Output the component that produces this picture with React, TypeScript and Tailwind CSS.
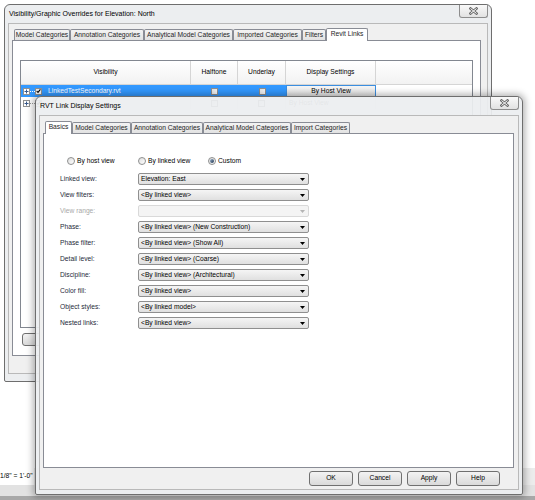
import type { ReactNode } from "react"

function CloseButton() {
  return (
    <div className="flex h-[13px] w-[29px] items-center justify-center rounded-b-[3px] border border-t-0 border-[#8d8d8d] bg-gradient-to-b from-[#f9f9f9] to-[#e2e2e2]">
      <svg width="9" height="8" viewBox="0 0 9 8">
        <path d="M1.5 1.5 L7.5 6.5 M7.5 1.5 L1.5 6.5" stroke="#6b6b6b" strokeWidth="2.6" strokeLinecap="square" />
        <path d="M1.5 1.5 L7.5 6.5 M7.5 1.5 L1.5 6.5" stroke="#ffffff" strokeWidth="1" />
      </svg>
    </div>
  )
}

function Window({ title, className, children }: { title: string; className: string; children: ReactNode }) {
  return (
    <div className={`absolute flex flex-col rounded-t-[6px] rounded-b-[2px] border border-[#6e6e6e] px-[3px] ${className}`}>
      <div className="flex h-[18px] shrink-0 items-start justify-between">
        <span className="pl-[1px] pt-[5px] text-[7px] leading-[8px] text-black">{title}</span>
        <CloseButton />
      </div>
      {children}
    </div>
  )
}

function Tab({ label, width, active }: { label: string; width: string; active?: boolean }) {
  if (active) {
    return (
      <div className={`relative z-10 -mb-px flex h-[13px] items-start justify-center rounded-t-[2px] border border-b-0 border-[#898c95] bg-white pt-[2px] ${width}`}>
        {label}
      </div>
    )
  }
  return (
    <div className={`flex h-[11px] items-center justify-center rounded-t-[2px] border border-b-0 border-[#898c95] bg-gradient-to-b from-[#f3f3f3] to-[#e2e2e2] ${width}`}>
      {label}
    </div>
  )
}

function Expander() {
  return (
    <span className="flex h-[7px] w-[7px] items-center justify-center border border-[#919191] bg-white">
      <svg width="5" height="5" viewBox="0 0 5 5">
        <path d="M0.5 2.5 H4.5 M2.5 0.5 V4.5" stroke="#3a5a8c" strokeWidth="1" />
      </svg>
    </span>
  )
}

function Check({ checked }: { checked?: boolean }) {
  return (
    <span className="flex h-[7px] w-[7px] items-center justify-center border border-[#8f8f8f] bg-gradient-to-br from-[#e4e4e4] to-white">
      {checked && (
        <svg width="6" height="6" viewBox="0 0 6 6">
          <path d="M0.8 3 L2.4 4.7 L5.3 1" stroke="#000" strokeWidth="1.3" fill="none" />
        </svg>
      )}
    </span>
  )
}

function Radio({ checked }: { checked?: boolean }) {
  return (
    <span className="flex h-[8px] w-[8px] items-center justify-center rounded-full border border-[#8e8f8f] bg-gradient-to-br from-[#dedede] to-white">
      {checked && <span className="h-[4px] w-[4px] rounded-full bg-gradient-to-br from-[#9fb6cf] to-[#1c324c]" />}
    </span>
  )
}

function Combo({ value, disabled }: { value: string; disabled?: boolean }) {
  return (
    <div
      className={`flex h-[12px] w-[171px] items-center justify-between rounded-[2px] border pl-[2px] pr-[3px] ${
        disabled ? "border-[#d9d9d9] bg-[#f4f4f4]" : "border-[#8f8f8f] bg-gradient-to-b from-[#f5f5f5] to-[#e0e0e0]"
      }`}
    >
      <span className="text-black">{value}</span>
      <svg width="5" height="3" viewBox="0 0 5 3">
        <path d="M0 0 H5 L2.5 3 Z" fill={disabled ? "#b4b4b4" : "#000"} />
      </svg>
    </div>
  )
}

function DialogButton({ label }: { label: string }) {
  return (
    <div className="flex h-[15px] w-[44px] items-center justify-center rounded-[3px] border border-[#707070] bg-gradient-to-b from-[#f3f3f3] to-[#dadada] text-black">
      {label}
    </div>
  )
}

export default function App() {
  const settings = [
    { label: "Linked view:", value: "Elevation: East" },
    { label: "View filters:", value: "<By linked view>" },
    { label: "View range:", value: "", disabled: true },
    { label: "Phase:", value: "<By linked view> (New Construction)" },
    { label: "Phase filter:", value: "<By linked view> (Show All)" },
    { label: "Detail level:", value: "<By linked view> (Coarse)" },
    { label: "Discipline:", value: "<By linked view> (Architectural)" },
    { label: "Color fill:", value: "<By linked view>" },
    { label: "Object styles:", value: "<By linked model>" },
    { label: "Nested links:", value: "<By linked view>" },
  ]

  return (
    <div className="relative h-[500px] w-[535px] overflow-hidden bg-white font-['Liberation_Sans',Arial,sans-serif] text-[6.7px] leading-none text-[#1e1e1e]">
      {/* status bar behind the dialogs */}
      <div className="absolute bottom-0 left-0 flex w-full flex-col">
        <div className="flex h-[17px]">
          <div className="flex w-[34px] items-center bg-white text-black">1/8" = 1'-0"</div>
          <div className="flex-1 bg-[#ececec]" />
        </div>
        <div className="h-[11px] bg-[#e2e2e2]" />
        <div className="h-[4px] bg-[#a8a8a8]" />
      </div>

      {/* Visibility/Graphic Overrides */}
      <Window title="Visibility/Graphic Overrides for Elevation: North" className="left-[4px] top-[4px] h-[378px] w-[488px] bg-[#eceef0]">
        <div className="mb-[7px] flex flex-1 flex-col border border-[#b9b9b9] bg-[#f0f0f0] pl-[3px] pr-[6px] pt-[3px]">
          <div className="flex h-[13px] items-end pl-[2px]">
            <Tab label="Model Categories" width="w-[56px]" />
            <Tab label="Annotation Categories" width="w-[74px]" />
            <Tab label="Analytical Model Categories" width="w-[89px]" />
            <Tab label="Imported Categories" width="w-[69px]" />
            <Tab label="Filters" width="w-[24px]" />
            <Tab label="Revit Links" width="w-[42px]" active />
          </div>
          <div className="flex h-[316px] flex-col border border-[#898c95] bg-white px-[7px] pt-[19px]">
            <div className="flex h-[268px] flex-col border border-[#828790] bg-white">
              <div className="flex h-[24px] border-b border-[#d5d5d5] bg-gradient-to-b from-white to-[#f2f2f2] text-black">
                <div className="flex w-[170px] items-center justify-center border-r border-[#d5d5d5]">Visibility</div>
                <div className="flex w-[47px] items-center justify-center border-r border-[#d5d5d5]">Halftone</div>
                <div className="flex w-[48px] items-center justify-center border-r border-[#d5d5d5]">Underlay</div>
                <div className="flex w-[90px] items-center justify-center border-r border-[#d5d5d5]">Display Settings</div>
                <div className="flex-1" />
              </div>
              <div className="flex h-[12px]">
                <div className="flex w-[170px] items-center bg-[#3399ff] pl-[2px]">
                  <Expander />
                  <span className="w-[5px] border-t border-dotted border-white" />
                  <Check checked />
                  <span className="ml-[6px] text-white">LinkedTestSecondary.rvt</span>
                </div>
                <div className="flex w-[47px] items-center justify-center bg-[#3399ff]">
                  <Check />
                </div>
                <div className="flex w-[48px] items-center justify-center bg-[#3399ff]">
                  <Check />
                </div>
                <div className="flex w-[90px] items-center justify-center border border-[#3b8ee0] bg-gradient-to-b from-[#f6f6f6] to-[#e4e4e4] text-black">
                  By Host View
                </div>
                <div className="flex-1" />
              </div>
              <div className="flex h-[12px]">
                <div className="flex w-[170px] items-center border-r border-[#e6e6e6] pl-[2px]">
                  <Expander />
                  <span className="w-[5px] border-t border-dotted border-[#9a9a9a]" />
                  <Check checked />
                </div>
                <div className="flex w-[47px] items-center justify-center border-r border-[#e6e6e6]">
                  <Check />
                </div>
                <div className="flex w-[48px] items-center justify-center border-r border-[#e6e6e6]">
                  <Check />
                </div>
                <div className="flex w-[90px] items-center border-r border-[#e6e6e6] pl-[3px] text-[#777]">By Host View</div>
                <div className="flex-1" />
              </div>
            </div>
            <div className="ml-[2px] mt-[5px] h-[13px] w-[70px] rounded-[3px] border border-[#707070] bg-gradient-to-b from-[#f3f3f3] to-[#dadada]" />
          </div>
        </div>
      </Window>

      {/* RVT Link Display Settings */}
      <Window
        title="RVT Link Display Settings"
        className="left-[35px] top-[96px] h-[399px] w-[488px] bg-[#eceef0]/[0.93] shadow-[0_0_7px_2px_rgba(0,0,0,0.3)]"
      >
        <div className="mb-[4px] flex flex-1 flex-col border border-[#b9b9b9] bg-[#f0f0f0] pl-[3px] pr-[4px] pt-[5px]">
          <div className="flex h-[12px] items-end pl-[2px]">
            <Tab label="Basics" width="w-[27px]" active />
            <Tab label="Model Categories" width="w-[59px]" />
            <Tab label="Annotation Categories" width="w-[72px]" />
            <Tab label="Analytical Model Categories" width="w-[88px]" />
            <Tab label="Import Categories" width="w-[59px]" />
          </div>
          <div className="flex h-[335px] flex-col border border-[#898c95] bg-white pl-[16px] pt-[23px]">
            <div className="ml-[7px] flex h-[8px] items-center text-black">
              <div className="flex w-[71px] items-center gap-[2px]">
                <Radio />
                <span>By host view</span>
              </div>
              <div className="flex w-[70px] items-center gap-[2px]">
                <Radio />
                <span>By linked view</span>
              </div>
              <div className="flex items-center gap-[2px]">
                <Radio checked />
                <span>Custom</span>
              </div>
            </div>
            <div className="mt-[8px] grid grid-cols-[78px_171px] gap-y-[4px]">
              {settings.map((s) => (
                <div key={s.label} className="contents">
                  <div className={`flex h-[12px] items-center ${s.disabled ? "text-[#a8a8a8]" : "text-[#1e2a3a]"}`}>{s.label}</div>
                  <Combo value={s.value} disabled={s.disabled} />
                </div>
              ))}
            </div>
          </div>
          <div className="mt-[3px] flex justify-end gap-[5px] pr-[14px]">
            <DialogButton label="OK" />
            <DialogButton label="Cancel" />
            <DialogButton label="Apply" />
            <DialogButton label="Help" />
          </div>
        </div>
      </Window>
    </div>
  )
}
